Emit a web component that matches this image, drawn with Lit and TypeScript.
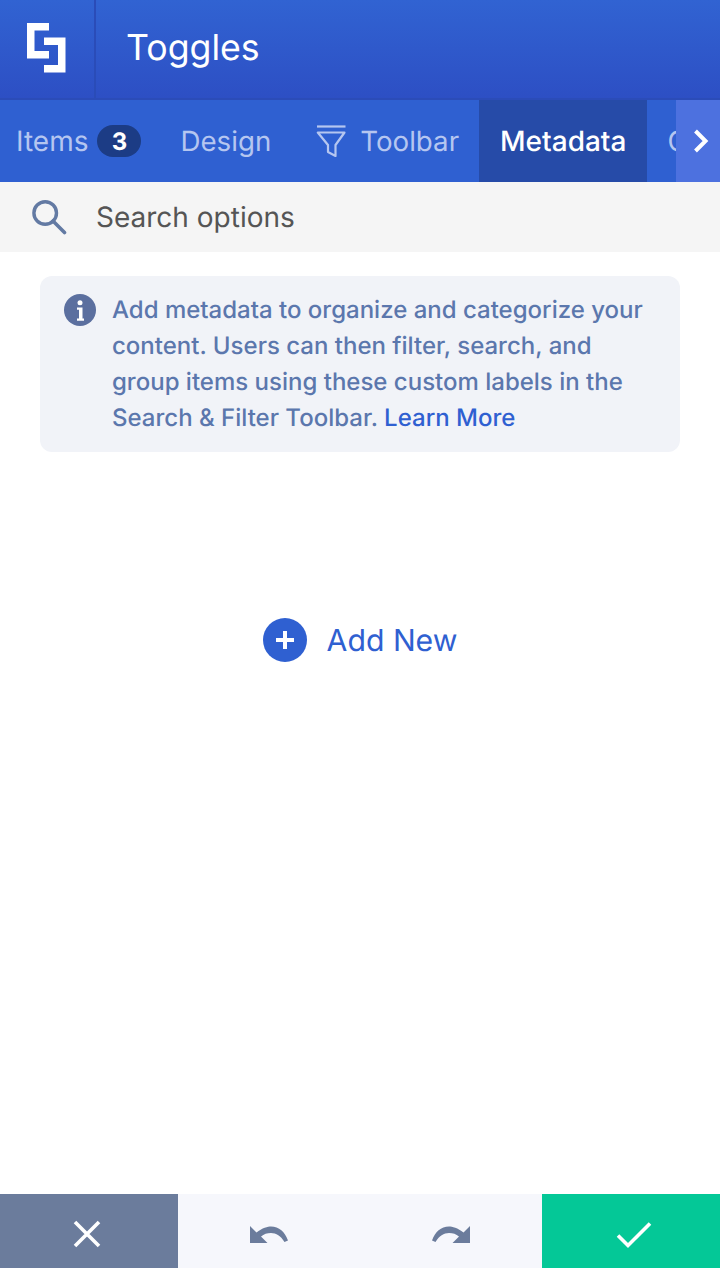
import { LitElement, html, css } from "lit";
import { customElement } from "lit/decorators.js";

@customElement("app-root")
export class AppRoot extends LitElement {
  static styles = css`
    :host { display: block; width: 720px; height: 1268px; font-family: Inter, "Liberation Sans", sans-serif; background: #fff; text-rendering: geometricPrecision; }
    .page { display: flex; flex-direction: column; height: 1268px; overflow: hidden; }
    .header { flex: none; height: 100px; box-sizing: border-box; display: flex; color: #fff; background: linear-gradient(180deg, #3163d2 0%, #2d4fc4 100%); border-bottom: 2px solid #2b4cb8; }
    .logo { flex: none; width: 96px; box-sizing: border-box; border-right: 2px solid #2a4cb8; display: flex; align-items: center; padding: 0 0 3px 27px; }
    .logo svg { display: block; }
    .title { font-size: 35.7px; line-height: 1; padding: 0 0 2px 30px; display: flex; align-items: center; font-weight: 400; }
    .tabs { flex: none; height: 82px; background: #2f60d1; display: flex; position: relative; overflow: hidden; white-space: nowrap; font-size: 27.7px; color: #b5c6f0; padding-left: 16px; }
    .tab { flex: none; display: flex; align-items: center; padding: 0 20px; }
    .tab.first { padding: 0 19px 0 0; font-size: 28px; }
    .tab.active { background: #264ba8; color: #fff; padding: 0 21px; font-weight: 500; font-size: 28px; }
    .badge { width: 44px; height: 32px; border-radius: 16px; background: #1c3c85; color: #fff; font-size: 24px; font-weight: 700; display: flex; align-items: center; justify-content: center; margin-left: 9px; }
    .filter { margin: 0 14px 0 5px; display: block; }
    .next { position: absolute; right: 0; top: 0; width: 44px; height: 82px; box-sizing: border-box; padding-left: 5px; background: #4d71df; display: flex; align-items: center; justify-content: center; }
    .search { flex: none; height: 70px; background: #f5f5f5; display: flex; align-items: center; padding-left: 32px; color: #555; font-size: 28px; }
    .search svg { margin-right: 29px; display: block; }
    .content { flex: 1; min-height: 0; padding: 24px 40px 0; position: relative; }
    .info { box-sizing: border-box; height: 176px; background: #f1f3f8; border-radius: 12px; padding: 16px 24px; display: flex; gap: 16px; color: #5b77ad; font-size: 24px; line-height: 36px; font-weight: 500; }
    .info svg { flex: none; margin-top: 2px; display: block; }
    .info a { color: #2f60d1; text-decoration: none; }
    .add { display: flex; align-items: center; justify-content: center; gap: 20px; margin-top: 166px; color: #2f60d1; font-size: 30.2px; }
    .add svg { display: block; }
    .add span { display: block; padding-top: 2px; }
    .footer { flex: none; height: 74px; display: flex; background: #f6f7fc; }
    .btn { flex: 1; display: flex; align-items: center; justify-content: center; padding-top: 7px; }
    .btn.cancel { flex: none; box-sizing: border-box; width: 178px; background: #6b7c9c; padding-right: 4px; padding-top: 6px; }
    .btn.ok { flex: none; box-sizing: border-box; width: 178px; background: #04c897; padding-left: 5px; }
    .btn svg { display: block; }
  `;

  render() {
    return html`
      <div class="page">
        <header class="header">
          <div class="logo">
            <svg width="39" height="50" viewBox="0 0 39 50" fill="#fff">
              <path d="M0 0H22V7.500H7.500V28H22V35.500H0Z"/>
              <path d="M17 14.500H38.500V49.500H17V42H31V22H17Z"/>
            </svg>
          </div>
          <div class="title">Toggles</div>
        </header>
        <nav class="tabs">
          <div class="tab first">Items<span class="badge">3</span></div>
          <div class="tab">Design</div>
          <div class="tab">
            <svg class="filter" width="30" height="32" viewBox="0 0 30 32" fill="none" stroke="#b5c6f0" stroke-width="2.2">
              <path d="M1 1.500H29.500"/>
              <path d="M1.800 7.500H28.500L19.500 20V31L12 27V20Z" stroke-linejoin="round"/>
            </svg>Toolbar
          </div>
          <div class="tab active">Metadata</div>
          <div class="tab">Options</div>
          <div class="next">
            <svg width="16" height="24" viewBox="0 0 16 24" fill="none" stroke="#fff" stroke-width="4">
              <path d="M2.500 2L12.500 12L2.500 22"/>
            </svg>
          </div>
        </nav>
        <div class="search">
          <svg width="35" height="35" viewBox="0 0 35 35" fill="none" stroke="#637aa3" stroke-width="3.400">
            <circle cx="13.200" cy="13" r="11.300"/>
            <path d="M21 21L32.500 32.500" stroke-width="3.600" stroke-linecap="round"/>
          </svg>
          <span>Search options</span>
        </div>
        <main class="content">
          <div class="info">
            <svg width="32" height="32" viewBox="0 0 32 32">
              <circle cx="16" cy="16" r="16" fill="#5b6f9f"/>
              <circle cx="16" cy="8.800" r="2.500" fill="#fff"/>
              <path d="M13 13.500H18.500V24.500H20V26.800H13V24.500H15V15.800H13Z" fill="#fff"/>
            </svg>
            <div>Add metadata to organize and categorize your content. Users can then filter, search, and group items using these custom labels in the Search &amp; Filter Toolbar. <a>Learn More</a></div>
          </div>
          <div class="add">
            <svg width="44" height="44" viewBox="0 0 44 44">
              <circle cx="22" cy="22" r="22" fill="#2f60d1"/>
              <path d="M22 13V31M13 22H31" stroke="#fff" stroke-width="4"/>
            </svg>
            <span>Add New</span>
          </div>
        </main>
        <footer class="footer">
          <div class="btn cancel">
            <svg width="28" height="28" viewBox="0 0 28 28" stroke="#fff" stroke-width="3.600" fill="none"><path d="M2 2L26 26M26 2L2 26"/></svg>
          </div>
          <div class="btn">
            <svg width="38" height="17" viewBox="0 0 38 17" fill="#6b7c9c"><path d="M0 0L6.500 6.500C12 2 18 .5 21 .5C29 .5 35 6 38 14.500L34.500 16C31 10 26 7 21 7C17 7 14 8 11 10.500L17.500 17H0Z"/></svg>
          </div>
          <div class="btn">
            <svg width="38" height="17" viewBox="0 0 38 17" fill="#6b7c9c"><path d="M38 0L31.500 6.500C26 2 20 .5 17 .5C9 .5 3 6 0 14.500L3.500 16C7 10 12 7 17 7C21 7 24 8 27 10.500L20.500 17H38Z"/></svg>
          </div>
          <div class="btn ok">
            <svg width="36" height="28" viewBox="0 0 36 28" stroke="#fff" stroke-width="3.600" fill="none"><path d="M2 14.500L12 24.500L34 2.500"/></svg>
          </div>
        </footer>
      </div>
    `;
  }
}
